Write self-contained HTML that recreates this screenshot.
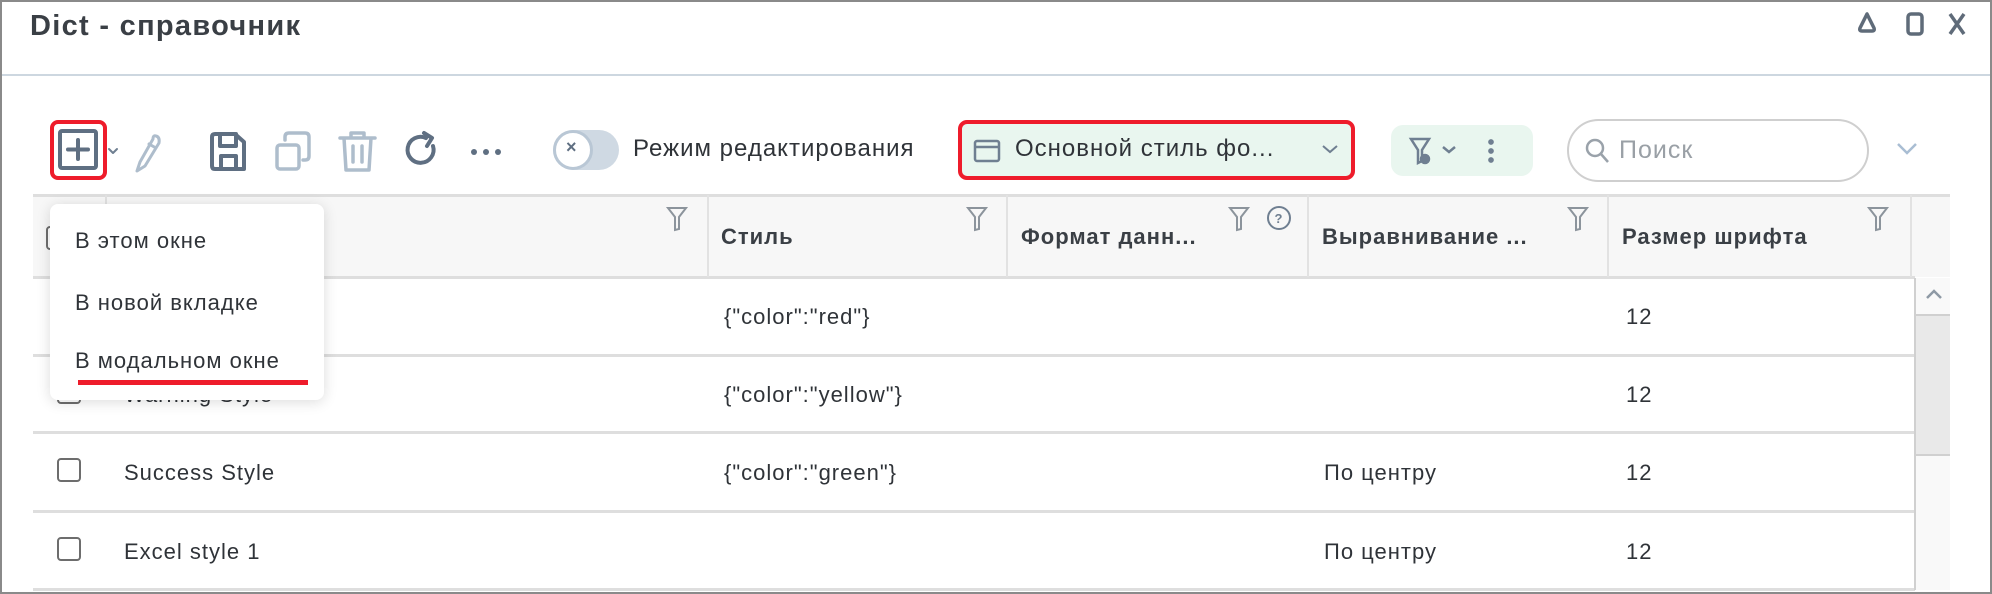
<!DOCTYPE html>
<html><head><meta charset="utf-8"><style>
*{box-sizing:border-box;margin:0;padding:0}
body{width:1992px;height:594px;background:#fff;font-family:"Liberation Sans","DejaVu Sans",sans-serif;color:#2f3338;position:relative;overflow:hidden}
.a{position:absolute}
.frame{left:0;top:0;width:1992px;height:594px;border:2px solid #8a8a8a}
.t{font-size:22px;letter-spacing:1px;white-space:nowrap}
.h{font-weight:bold;color:#3a3f45;font-size:22px;letter-spacing:1px}
.hl{position:absolute;height:3px;background:#dedede;left:33px;width:1882px}
.vl{position:absolute;width:2px;background:#e2e2e2;top:195px;height:82px}
.cb{position:absolute;width:24px;height:24px;border:2px solid #6d6d6d;border-radius:4px;background:#fff}
</style></head><body>
<div class="a frame"></div>
<div class="a" style="left:30px;top:10px;font-size:29px;font-weight:bold;color:#3a3f45;letter-spacing:1.3px">Dict - справочник</div>
<svg class="a" style="left:1852px;top:8px" width="130" height="30" viewBox="0 0 130 30" fill="none" stroke="#5f6b79" stroke-width="3.5">
<path d="M15 6 L8 20 Q7 23 10 23 L20 23 Q23 23 22 20 Z" stroke-linejoin="round"/>
<rect x="56" y="6" width="14" height="20" rx="3"/>
<path d="M98 6 L112 26 M112 6 L98 26"/>
</svg>
<div class="a" style="left:2px;top:74px;width:1988px;height:2px;background:#cdd7e0"></div>

<div class="a" style="left:50px;top:120px;width:57px;height:60px;border:4px solid #ee1c2b;border-radius:8px"></div>
<svg class="a" style="left:55px;top:124px" width="470" height="52" viewBox="0 0 470 52" fill="none" stroke-linecap="round" stroke-linejoin="round">
<rect x="5" y="7" width="36" height="37" rx="2" stroke="#5f6f82" stroke-width="4"/>
<path d="M23 16 V35 M13 25.5 H33" stroke="#5f6f82" stroke-width="4"/>
<path d="M54 25 L58 29 L62 25" stroke="#6f7f91" stroke-width="2"/>
<path d="M98 15 L85 38 L82 47 L90 42 L104 19 Q105 13 101 12 Q98 11 98 15 Z M94 20 L101 24" stroke="#aebdcc" stroke-width="3"/>
<path d="M160 10 H180 L189 18 V45 H160 Q157 45 157 42 V13 Q157 10 160 10 Z M165 10 V22 H181 V10 M166 45 V32 H181 V45" stroke="#5f6f82" stroke-width="4"/>
<rect x="222" y="21" width="22" height="24" rx="3" stroke="#aebdcc" stroke-width="3.5"/>
<path d="M230 16 V13 Q230 9 234 9 H250 Q254 9 254 13 V32 Q254 36 250 36 H248" stroke="#aebdcc" stroke-width="3.5"/>
<path d="M285 14 H320 M296 14 V9 H309 V14 M289 14 L291 46 H314 L316 14 M298 22 V38 M307 22 V38" stroke="#aebdcc" stroke-width="3.5"/>
<path d="M371 14 A13 13 0 1 0 378 22" stroke="#5f6f82" stroke-width="4"/>
<path d="M369 9 L377 14 L372 22" stroke="#5f6f82" stroke-width="4"/>
<circle cx="419" cy="28" r="3" fill="#5f6f82" stroke="none"/><circle cx="431" cy="28" r="3" fill="#5f6f82" stroke="none"/><circle cx="443" cy="28" r="3" fill="#5f6f82" stroke="none"/>
</svg>
<div class="a" style="left:553px;top:130px;width:66px;height:40px;border-radius:20px;background:#cfd9e3"></div>
<div class="a" style="left:553px;top:130px;width:40px;height:40px;border-radius:20px;background:#fff;border:3px solid #b9c7d5"></div>
<div class="a" style="left:566px;top:137px;font-size:18px;font-weight:bold;color:#5f6f82">×</div>
<div class="a t" style="left:633px;top:135px;font-size:24px">Режим редактирования</div>

<div class="a" style="left:958px;top:120px;width:397px;height:60px;border:4px solid #ee1c2b;border-radius:9px;background:#e9f6ef"></div>
<svg class="a" style="left:972px;top:138px" width="30" height="26" fill="none" stroke="#6f7f91" stroke-width="2.5"><rect x="3" y="3" width="24" height="20" rx="2"/><path d="M3 9 H27"/></svg>
<div class="a t" style="left:1015px;top:135px;font-size:24px">Основной стиль фо...</div>
<svg class="a" style="left:1320px;top:142px" width="20" height="14" fill="none" stroke="#6f7f91" stroke-width="2"><path d="M3 4 L10 10 L17 4"/></svg>

<div class="a" style="left:1391px;top:125px;width:142px;height:51px;border-radius:12px;background:#e9f6ef"></div>
<svg class="a" style="left:1405px;top:133px" width="120" height="36" fill="none" stroke="#6f7f91" stroke-width="2.5"><path d="M6 6 H24 L17 17 V28 L13 30 V17 Z"/><circle cx="20" cy="26" r="4" fill="#6f7f91"/><path d="M38 14 L44 19 L50 14"/><circle cx="86" cy="9" r="1.6" fill="#6f7f91"/><circle cx="86" cy="18" r="1.6" fill="#6f7f91"/><circle cx="86" cy="27" r="1.6" fill="#6f7f91"/></svg>

<div class="a" style="left:1567px;top:119px;width:302px;height:63px;border:2px solid #cfcfcf;border-radius:32px"></div>
<svg class="a" style="left:1584px;top:137px" width="30" height="30" fill="none" stroke="#9aa2aa" stroke-width="2.5"><circle cx="11" cy="11" r="8"/><path d="M17 17 L24 25"/></svg>
<div class="a t" style="left:1619px;top:136px;font-size:25px;color:#9aa0a6">Поиск</div>
<svg class="a" style="left:1895px;top:140px" width="24" height="18" fill="none" stroke="#a9bdd3" stroke-width="2.5"><path d="M3 4 L12 13 L21 4"/></svg>

<div class="a" style="left:33px;top:195px;width:1917px;height:82px;background:#f7f7f7"></div>
<div class="hl" style="top:194px;width:1917px"></div>
<div class="hl" style="top:276px"></div>
<div class="vl" style="left:105px"></div>
<div class="vl" style="left:707px"></div>
<div class="vl" style="left:1006px"></div>
<div class="vl" style="left:1307px"></div>
<div class="vl" style="left:1607px"></div>
<div class="vl" style="left:1910px"></div>
<div class="a" style="left:1950px;top:195px;width:38px;height:82px;background:#fff"></div>
<div class="a t h" style="left:721px;top:224px">Стиль</div>
<div class="a t h" style="left:1021px;top:224px">Формат данн...</div>
<div class="a t h" style="left:1322px;top:224px">Выравнивание ...</div>
<div class="a t h" style="left:1622px;top:224px">Размер шрифта</div>
<svg class="a" style="left:0;top:205px" width="1992" height="30" fill="none" stroke="#8c949c" stroke-width="2">
<path d="M668 3 H686 L679 12 V24 L675 25 V12 Z"/>
<path d="M968 3 H986 L979 12 V24 L975 25 V12 Z"/>
<path d="M1230 3 H1248 L1241 12 V24 L1237 25 V12 Z"/>
<circle cx="1279" cy="13" r="11" stroke="#6f7f91"/><text x="1274.5" y="18" font-size="13" font-family="Liberation Sans" fill="#6f7f91" stroke="none" font-weight="bold">?</text>
<path d="M1569 3 H1587 L1580 12 V24 L1576 25 V12 Z"/>
<path d="M1869 3 H1887 L1880 12 V24 L1876 25 V12 Z"/>
</svg>
<div class="cb" style="left:46px;top:226px"></div>

<div class="hl" style="top:354px"></div>
<div class="hl" style="top:431px"></div>
<div class="hl" style="top:510px"></div>
<div class="hl" style="top:588px"></div>
<div class="a t" style="left:724px;top:304px">{"color":"red"}</div>
<div class="a t" style="left:1626px;top:304px">12</div>
<div class="cb" style="left:57px;top:380px"></div>
<div class="a t" style="left:124px;top:382px">Warning Style</div>
<div class="a t" style="left:724px;top:382px">{"color":"yellow"}</div>
<div class="a t" style="left:1626px;top:382px">12</div>
<div class="cb" style="left:57px;top:458px"></div>
<div class="a t" style="left:124px;top:460px">Success Style</div>
<div class="a t" style="left:724px;top:460px">{"color":"green"}</div>
<div class="a t" style="left:1324px;top:460px">По центру</div>
<div class="a t" style="left:1626px;top:460px">12</div>
<div class="cb" style="left:57px;top:537px"></div>
<div class="a t" style="left:124px;top:539px">Excel style 1</div>
<div class="a t" style="left:1324px;top:539px">По центру</div>
<div class="a t" style="left:1626px;top:539px">12</div>

<div class="a" style="left:1914px;top:278px;width:2px;height:312px;background:#d0d0d0"></div>
<div class="a" style="left:1916px;top:278px;width:34px;height:312px;background:#f9f9f9"></div>
<div class="a" style="left:1916px;top:314px;width:34px;height:142px;background:#e9e9e9;border-top:2px solid #d0d0d0;border-bottom:2px solid #d0d0d0"></div>
<svg class="a" style="left:1924px;top:288px" width="20" height="14" fill="none" stroke="#8e99a5" stroke-width="2.5"><path d="M3 10 L10 3 L17 10"/></svg>

<div class="a" style="left:50px;top:204px;width:274px;height:196px;background:#fff;border-radius:8px;box-shadow:0 2px 14px rgba(0,0,0,0.14)"></div>
<div class="a t" style="left:75px;top:228px">В этом окне</div>
<div class="a t" style="left:75px;top:290px">В новой вкладке</div>
<div class="a t" style="left:75px;top:348px">В модальном окне</div>
<div class="a" style="left:78px;top:380px;width:230px;height:5px;background:#ee1c2b"></div>
</body></html>
